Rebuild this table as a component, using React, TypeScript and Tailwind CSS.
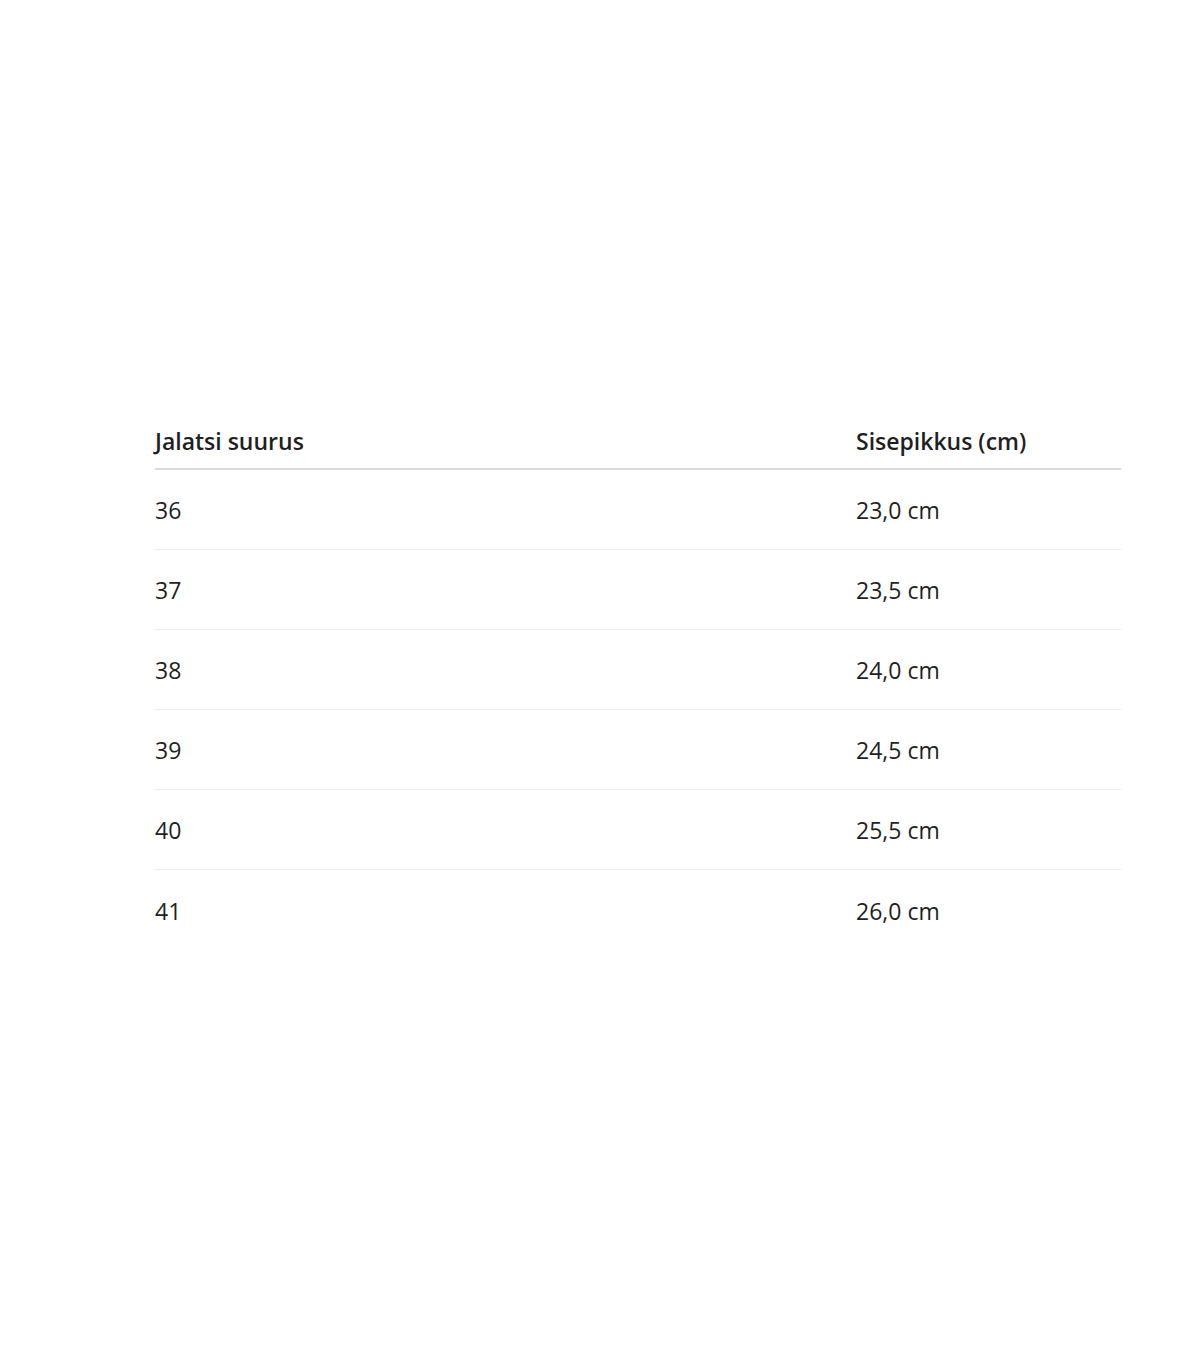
const rows = [
  { size: "36", length: "23,0 cm" },
  { size: "37", length: "23,5 cm" },
  { size: "38", length: "24,0 cm" },
  { size: "39", length: "24,5 cm" },
  { size: "40", length: "25,5 cm" },
  { size: "41", length: "26,0 cm" },
];

export default function App() {
  return (
    <div
      className="w-[1200px] h-[1372px] bg-white text-[#1f1f1f] pt-[412px] pl-[155px]"
      style={{ fontFamily: '"Open Sans", "Noto Sans", sans-serif' }}
    >
      <div className="w-[966px]">
        <div className="flex h-[58px] items-center pt-[2px] border-b-2 border-[#dcdcdc] text-[23px] font-semibold">
          <div className="w-[701px]">Jalatsi suurus</div>
          <div className="flex-1">Sisepikkus (cm)</div>
        </div>
        {rows.map((row, index) => (
          <div
            key={ index }
            className={`flex h-[80px] items-center pt-[2px] text-[23px] ${index < rows.length - 1 ? "border-b border-[#ececec]" : ""}`}
          >
            <div className="w-[701px]">{ row.size }</div>
            <div className="flex-1">{ row.length }</div>
          </div>
        ))}
      </div>
    </div>
  );
}
